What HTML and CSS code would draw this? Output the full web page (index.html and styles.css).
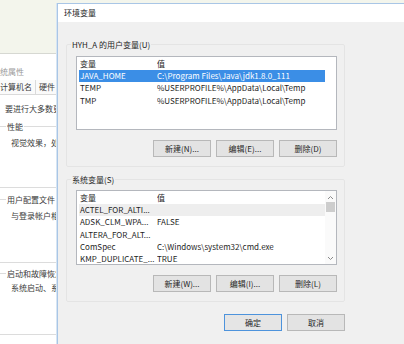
FILE: index.html
```html
<!DOCTYPE html>
<html lang="zh-CN">
<head>
<meta charset="utf-8">
<title>环境变量</title>
<link rel="stylesheet" href="styles.css">
</head>
<body>
<div class="screen">
  <div class="bgwin">
    <div class="desk"></div>
    <div class="sys">
      <div class="sys-title">统属性</div>
      <div class="sys-tabs"><span class="tab">计算机名</span><span class="tab">硬件</span></div>
      <div class="sys-body">
        <div class="sys-note">要进行大多数更改，你必须作为管理员登录。</div>
        <fieldset class="sgrp g1">
          <legend>性能</legend>
          <div class="sg-text">视觉效果，处理器计划，内存使用，以及虚拟内存</div>
        </fieldset>
        <fieldset class="sgrp g2">
          <legend>用户配置文件</legend>
          <div class="sg-text">与登录帐户相关的桌面设置</div>
        </fieldset>
        <fieldset class="sgrp g3">
          <legend>启动和故障恢复</legend>
          <div class="sg-text">系统启动、系统故障和调试信息</div>
        </fieldset>
      </div>
    </div>
  </div>

  <div class="dlg">
    <div class="dlg-title">环境变量</div>
    <div class="dlg-body">
      <fieldset class="grp user">
        <legend>HYH_A 的用户变量(U)</legend>
        <div class="list ulist">
          <div class="rows">
            <div class="row head"><span class="c1">变量</span><span class="c2">值</span></div>
            <div class="row sel"><span class="c1">JAVA_HOME</span><span class="c2">C:\Program Files\Java\jdk1.8.0_111</span></div>
            <div class="row"><span class="c1">TEMP</span><span class="c2">%USERPROFILE%\AppData\Local\Temp</span></div>
            <div class="row"><span class="c1">TMP</span><span class="c2">%USERPROFILE%\AppData\Local\Temp</span></div>
          </div>
        </div>
        <div class="btns">
          <button class="btn">新建(N)...</button>
          <button class="btn">编辑(E)...</button>
          <button class="btn">删除(D)</button>
        </div>
      </fieldset>

      <fieldset class="grp sysv">
        <legend>系统变量(S)</legend>
        <div class="list slist">
          <div class="rows">
            <div class="row head"><span class="c1">变量</span><span class="c2">值</span></div>
            <div class="row hot"><span class="c1">ACTEL_FOR_ALTI...</span><span class="c2"></span></div>
            <div class="row"><span class="c1">ADSK_CLM_WPA...</span><span class="c2">FALSE</span></div>
            <div class="row"><span class="c1">ALTERA_FOR_ALT...</span><span class="c2"></span></div>
            <div class="row"><span class="c1">ComSpec</span><span class="c2">C:\Windows\system32\cmd.exe</span></div>
            <div class="row"><span class="c1">KMP_DUPLICATE_...</span><span class="c2">TRUE</span></div>
          </div>
          <div class="vscroll">
            <svg class="arrow" width="7" height="5" viewBox="0 0 7 5"><path d="M1 4 L3.5 1.5 L6 4" fill="none" stroke="#8a8a8a" stroke-width="1"/></svg>
            <div class="track"><div class="thumb"></div></div>
            <svg class="arrow" width="7" height="5" viewBox="0 0 7 5"><path d="M1 1 L3.5 3.5 L6 1" fill="none" stroke="#8a8a8a" stroke-width="1"/></svg>
          </div>
        </div>
        <div class="btns">
          <button class="btn">新建(W)...</button>
          <button class="btn">编辑(I)...</button>
          <button class="btn">删除(L)</button>
        </div>
      </fieldset>

      <div class="footer">
        <button class="btn primary">确定</button>
        <button class="btn">取消</button>
      </div>
    </div>
  </div>
</div>
</body>
</html>
```

FILE: styles.css
```css
* { box-sizing: border-box; }

html, body {
  margin: 0;
  padding: 0;
}

body {
  width: 404px;
  height: 344px;
  overflow: hidden;
  background: #f3f5ec;
  font-family: "Noto Sans CJK SC", "Noto Sans", sans-serif;
  font-size: 8px;
  color: #1e1e1e;
}

.screen {
  display: flex;
  width: 404px;
  height: 344px;
}

/* ---------- background window (System properties) ---------- */
.bgwin {
  width: 57px;
  flex: none;
  display: flex;
  flex-direction: column;
  overflow: hidden;
}

.desk {
  height: 53px;
  flex: none;
  background: #f3f5ec;
}

.sys {
  flex: 1;
  background: #ffffff;
  border-top: 1px solid #d6d8d2;
  white-space: nowrap;
  color: #3a3a3a;
}

.sys-title {
  height: 26px;
  padding-top: 12px;
  line-height: 11px;
  color: #9a9a9a;
}

.sys-tabs {
  height: 15px;
  display: flex;
  line-height: 14px;
  border-bottom: 1px solid #dadada;
  background: #fafafa;
}

.tab {
  padding: 0 3px 0 0;
  border-right: 1px solid #dadada;
}

.tab + .tab {
  padding-left: 3px;
}

.sys-body {
  padding-top: 8px;
}

.sys-note {
  line-height: 11px;
  padding-left: 5px;
}

.sgrp {
  margin: 0 0 0 -4px;
  padding: 0 0 0 14px;
  border: 1px solid #dcdcdc;
  border-right: none;
  min-width: 0;
}

.sgrp legend {
  padding: 0 1px;
  margin-left: -5px;
  line-height: 11px;
}

.g1 { margin-top: 7px; padding-top: 5px; padding-bottom: 39px; }
.g2 { margin-top: 6px; padding-top: 5px; padding-bottom: 41px; }
.g3 { margin-top: 5px; padding-top: 3px; padding-bottom: 41px; }

.sg-text {
  line-height: 11px;
}

/* ---------- dialog ---------- */
.dlg {
  flex: 1;
  margin-top: 3px;
  border-top: 1px solid #a9c6e6;
  border-left: 1px solid #a9c6e6;
  box-shadow: -1px 0 0 #d7e5f3;
  display: flex;
  flex-direction: column;
  background: #f0f0f0;
}

.dlg-title {
  height: 18px;
  line-height: 18px;
  padding-left: 6px;
  background: #ffffff;
  color: #1a1a1a;
}

.dlg-body {
  flex: 1;
  padding: 17px 0 0 8px;
}

.grp {
  width: 279px;
  margin: 0;
  padding: 6px 7px 9px 9px;
  border: 1px solid #e4e4e4;
  border-radius: 2px;
  min-width: 0;
}

.grp legend {
  padding: 0 1px;
  margin-left: -5px;
  line-height: 11px;
}

.grp.sysv {
  margin-top: 7px;
  padding-top: 5px;
}

.list {
  height: 74px;
  border: 1px solid #b4b7bd;
  background: #ffffff;
  display: flex;
  overflow: hidden;
}

.slist {
  height: 75px;
}

.rows {
  flex: 1;
  padding-left: 2px;
  overflow: hidden;
}

.row {
  display: flex;
  width: 246px;
  height: 12.3px;
  line-height: 12px;
  white-space: nowrap;
}

.row.head {
  height: 13px;
  line-height: 13px;
}

.c1 {
  width: 78px;
  flex: none;
  padding-left: 1px;
  overflow: hidden;
}

.c2 {
  flex: 1;
  overflow: hidden;
}

.row.sel {
  background: #3b8ee6;
  color: #ffffff;
}

.row.hot {
  background: #eeeeee;
}

.vscroll {
  width: 11px;
  flex: none;
  background: #fafafa;
  display: flex;
  flex-direction: column;
  align-items: center;
}

.arrow {
  display: block;
  margin: 4px 0 2px;
  flex: none;
}

.vscroll .arrow:last-child {
  margin: 2px 0 3px;
}

.track {
  flex: 1;
  width: 100%;
  padding: 0 1px;
}

.thumb {
  height: 10px;
  background: #cdcdcd;
}

.btns {
  display: flex;
  justify-content: flex-end;
  gap: 5px;
  margin-top: 10px;
}

.btn {
  width: 58px;
  height: 17px;
  padding: 0;
  margin: 0;
  border: 1px solid #b8b8b8;
  background: #e3e3e3;
  font-family: "Noto Sans CJK SC", "Noto Sans", sans-serif;
  font-size: 8px;
  line-height: 15px;
  color: #262626;
}

.btn.primary {
  border-color: #4d93dc;
  background: #e5e5e5;
}

.footer {
  width: 279px;
  display: flex;
  justify-content: flex-end;
  gap: 5px;
  margin-top: 12px;
}
```
